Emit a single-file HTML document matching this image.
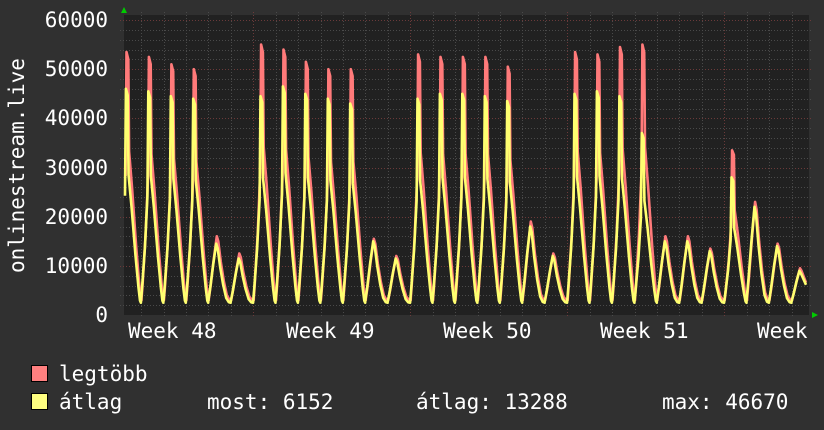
<!DOCTYPE html>
<html><head><meta charset="utf-8"><style>
html,body{margin:0;padding:0;background:#303030;}
body{width:824px;height:430px;overflow:hidden;position:relative;}
svg{position:absolute;left:0;top:0;}
text{font-family:"DejaVu Sans Mono","Liberation Mono",monospace;fill:#fff;font-size:21px;}
</style></head><body>
<svg id="g" width="824" height="430" xmlns="http://www.w3.org/2000/svg">
<rect x="0" y="0" width="824" height="430" fill="#303030"/>
<rect x="124" y="15" width="685" height="300" fill="#212121"/>
<g id="grid"></g>
<g id="data"></g>
<polygon points="121,13 127,13 124,7" fill="#00cc00"/>
<polygon points="812,312 812,318 818,315" fill="#00cc00"/>
<g text-anchor="end">
<text x="108" y="27">60000</text>
<text x="108" y="76">50000</text>
<text x="108" y="125">40000</text>
<text x="108" y="175">30000</text>
<text x="108" y="224">20000</text>
<text x="108" y="273">10000</text>
<text x="108" y="322">0</text>
</g>
<text transform="translate(24,273) rotate(-90)">onlinestream.live</text>
<text x="128" y="338">Week 48</text>
<text x="286" y="338">Week 49</text>
<text x="443" y="338">Week 50</text>
<text x="600" y="338">Week 51</text>
<text x="757" y="338">Week</text>
<rect x="31.5" y="365.5" width="16" height="16" fill="#ff8080" stroke="#000"/>
<rect x="31.5" y="393.5" width="16" height="16" fill="#ffff80" stroke="#000"/>
<text x="59" y="381">legtöbb</text>
<text x="59" y="409">átlag</text>
<text x="207" y="409">most: 6152</text>
<text x="416" y="409">átlag: 13288</text>
<text x="662" y="409">max: 46670</text>
</svg>
<script>
(function(){
var NS="http://www.w3.org/2000/svg";
var grid=document.getElementById('grid'),data=document.getElementById('data');
function line(x1,y1,x2,y2,c){var l=document.createElementNS(NS,'line');l.setAttribute('x1',x1);l.setAttribute('y1',y1);l.setAttribute('x2',x2);l.setAttribute('y2',y2);l.setAttribute('stroke',c);l.setAttribute('stroke-width',1);l.setAttribute('stroke-dasharray','1,2');grid.appendChild(l);}
function Y(v){return 315-v*295/60000;}
for(var v=2000;v<=60000;v+=2000){var y=Math.round(Y(v))+0.5;line(120,y,812,y,v%10000==0?'#6b3a3a':'#4a4a4a');}
var step=157/7;
for(var k=-20;k<20;k++){var x=567.3+k*step;if(x<125||x>808)continue;var maj=Math.abs(k%7)==0;line(Math.round(x)+0.5,12,Math.round(x)+0.5,318,maj?'#6b3a3a':'#4a4a4a');}
var R=[53500,52500,51000,50000,16000,12500,55000,54000,51500,50000,50000,15500,12000,53000,52500,52500,52500,50500,19000,12500,53500,53000,54500,55000,16000,16000,13500,33500,23000,14500,9500];
var A=[46000,45500,44500,44000,14500,11500,44500,46500,45000,44000,43000,15000,11500,44000,45000,45000,44500,43500,18000,12000,45000,45500,44500,37000,15000,15000,13000,28000,22000,14000,9000];
var hi=[[-7.9,0.01],[-7,0.06],[-4,0.26],[-1.5,0.5],[-0.6,1],[1.2,0.97],[2,0.6],[5,0.45],[9,0.22],[12,0.07],[13.5,0.01],[14.4,0]];
var lo=[[-8,0.02],[-6,0.25],[-3,0.65],[0,1],[1.5,0.92],[4,0.6],[7,0.3],[10,0.08],[12.5,0.01],[14.4,0]];
function build(P,mn,shift){
 var pts=[];
 for(var i=0;i<P.length;i++){
  var xp=126.5+i*22.43+shift;var prof=P[i]>25000?hi:lo;
  for(var j=0;j<prof.length;j++){var x=xp+prof[j][0];if(x<125)continue;if(i==P.length-1&&prof[j][0]>3)break;var v=mn+(P[i]-mn)*prof[j][1];pts.push(x.toFixed(1)+','+Y(v).toFixed(1));}
 }
 if(P===A){pts.push('806,'+Y(6152).toFixed(1));}else{pts.push('806,'+Y(6600).toFixed(1));}
 var p=document.createElementNS(NS,'polyline');p.setAttribute('points',pts.join(' '));p.setAttribute('fill','none');p.setAttribute('stroke-width','2.6');p.setAttribute('stroke-linejoin','round');return p;
}
var r=build(R,3000,0.6);r.setAttribute('stroke','#ff7a7a');data.appendChild(r);
var a=build(A,2500,0);a.setAttribute('stroke','#ffff70');data.appendChild(a);
})();
</script>
</body></html>
